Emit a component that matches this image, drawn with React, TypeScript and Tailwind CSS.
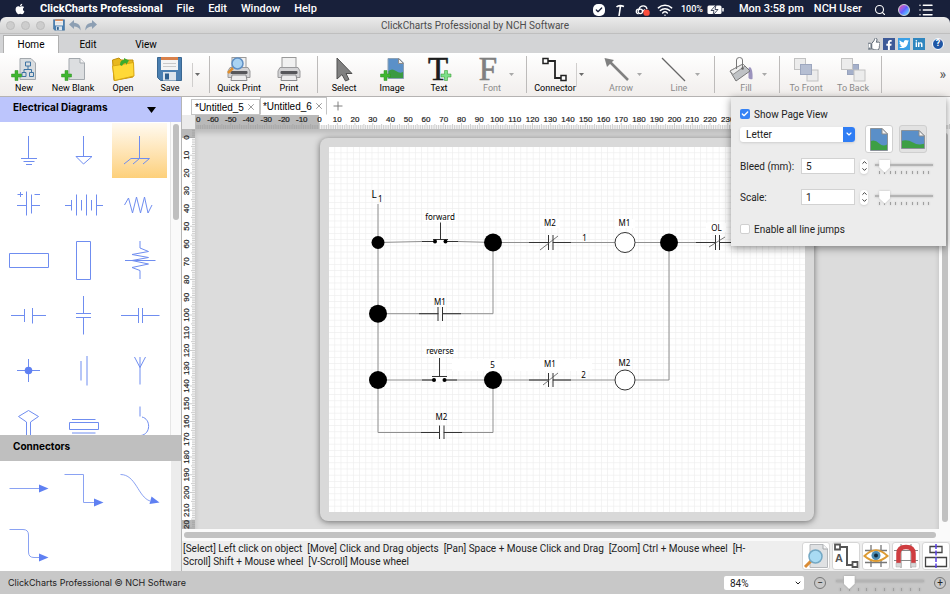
import React from 'react';
import { FaApple, FaFacebookF, FaTwitter, FaLinkedinIn, FaThumbsUp } from 'react-icons/fa';
import { Check, ChevronDown, ChevronUp, List, Plus, Search, Wifi, X } from 'lucide-react';

const UNIT = 17.75;

const symbols = [
	{ name: 'Earth ground', d: 'M27.5 13V35M20 35.5H36M22.5 38.5H33.5M25 41.5H31' },
	{ name: 'Signal ground', d: 'M27.5 13V33.5M20 33.5H36L27.5 41Z' },
	{ name: 'Chassis ground', d: 'M27.5 13V35.5M12 41L19 35.5H37.5L31 41M27.5 35.5L21 41', selected: true },
	{ name: 'Polarised capacitor', d: 'M16 27.5H25M25.5 13.5V37.5M30.5 16.5V35.5M30.5 27.5H39M16.5 16.5H22M19.5 14V19M33.5 16.5H39' },
	{ name: 'Battery', d: 'M9 27.5H15.5M15.5 22V32.5M20.5 16.5V37.5M25.5 22V32.5M30.5 16.5V37.5M35.5 22V32.5M40.5 16.5V37.5M40.5 27.5H47' },
	{ name: 'Resistor', d: 'M12.5 27L16.5 20L20.5 35L24.5 19L28.5 35L32.5 19L36 35L40 27' },
	{ name: 'Impedance', d: 'M8.5 20.5H47.5V34.5H8.5Z' },
	{ name: 'Vertical impedance', d: 'M20.5 8.5H34.5V46.5H20.5Z' },
	{ name: 'Tapped resistor', d: 'M28 8V15L36.5 18.5L20 21.5L36.5 24.5L20 27.5L36.5 31L20 34.5L28 37.5V46M13 27.5H43.5' },
	{ name: 'Contact', d: 'M10 27.5H23.5M23.5 21V34M31.5 20V35.5M31.5 27.5H45' },
	{ name: 'Vertical capacitor', d: 'M27.5 8V25.5M20 25.5H35M20 29.5H35M27.5 29.5V46.5' },
	{ name: 'Capacitor', d: 'M9 27.5H26M26.5 20V35M30.5 20V35M30.5 27.5H47.5' },
	{ name: 'Junction', d: 'M16 27.5H39M27.5 16V39', dot: true },
	{ name: 'Cell', d: 'M25 18V37.5M31 13V42.5' },
	{ name: 'Antenna', d: 'M28 14V41.5M22.5 14L28 24.5L33.5 14' },
	{ name: 'Loop antenna', d: 'M25.5 46V24L17.5 18.5L27.5 12.5L37.5 18.5L29.5 24V46' },
	{ name: 'Crystal', d: 'M16 21.5H39.5M13.5 24.5H42.5V31.5H13.5ZM16 35H39.5' },
	{ name: 'Coil', d: 'M28 8.5V18.5M30 19C39 21 39 36 29 37.5' },
];

const connectors = [
	{ name: 'Straight connector', d: 'M8.5 27.5H38', head: '38,23.5 47.5,27.5 38,31.5' },
	{ name: 'Elbow connector', d: 'M8.5 13.5H27.5V41.5H38', head: '38,37.5 47.5,41.5 38,45.5' },
	{ name: 'Curved connector', d: 'M8.5 13.5C24 13.5 26 36 38 40', head: '39.5,35.5 47.5,41.5 37.5,43' },
	{ name: 'Rounded connector', d: 'M8.5 13.5H22Q27.5 13.5 27.5 19V36Q27.5 41.5 33 41.5H38', head: '38,37.5 47.5,41.5 38,45.5' },
];

function MenuBar() {
	return (
		<header className="flex h-[17px] shrink-0 items-center bg-[#18203a] pt-0.5 pr-4 pl-3.5 text-[11px] font-medium text-white">
			<FaApple className="mr-3.5 mb-0.5 h-3 w-3" />
			<nav className="flex items-center gap-3.5 whitespace-nowrap">
				<a href="#app" className="font-bold">ClickCharts Professional</a>
				<a href="#file">File</a>
				<a href="#edit">Edit</a>
				<a href="#window">Window</a>
				<a href="#help">Help</a>
			</nav>
			<div className="ml-auto flex items-center whitespace-nowrap">
				<span className="mr-2.5 flex h-3 w-3 items-center justify-center rounded-[5px] bg-white text-[#18203a]">
					<Check className="h-2 w-2" strokeWidth={4} />
				</span>
				<svg viewBox="0 0 10 14" className="mr-2.5 h-3.5 w-2.5" fill="none" stroke="white" strokeWidth="1.6">
					<path d="M1.5 4Q4 1.5 9 3.5M5.5 3L4 13" />
				</svg>
				<svg viewBox="0 0 18 14" className="mr-1.5 h-3.5 w-4" fill="none" stroke="white" strokeWidth="1.4">
					<path d="M4 11.500C0 10.500 1 5.500 4.500 6C6 1 13 1.500 13.500 6" />
					<circle cx="6" cy="8.500" r="2.500" />
					<path d="M8 9.500L11 6.500" />
					<circle cx="13" cy="10" r="3.600" fill="#fb4d3d" stroke="none" />
				</svg>
				<Wifi className="mr-2 h-4 w-4" strokeWidth={2.2} />
				<span className="mr-1 text-[9px]">100%</span>
				<svg viewBox="0 0 18 10" className="mr-3.5 h-2.5 w-[18px]">
					<rect x="0.5" y="0.5" width="14" height="8.500" rx="1.500" fill="white" />
					<path d="M16 3V6.500" stroke="white" strokeWidth="1.500" />
					<path d="M9 0L4 5.500H7L6 10L11 4.500H8Z" fill="white" stroke="#18203a" strokeWidth="0.8" />
				</svg>
				<span className="mr-2.5">Mon 3:58 pm</span>
				<span className="mr-3">NCH User</span>
				<Search className="mr-3 h-3 w-3" strokeWidth={2.2} />
				<span className="mr-2 h-3 w-3 rounded-full border border-gray-300 bg-linear-to-br from-pink-500 via-indigo-500 to-cyan-300" />
				<List className="h-4 w-4" strokeWidth={2.2} />
			</div>
		</header>
	);
}

function TitleBar() {
	return (
		<div className="flex h-4 shrink-0 items-center rounded-t-md bg-linear-to-b from-[#ebebeb] to-[#d3d3d3] px-1.5">
			<div className="flex w-[120px] items-center gap-1.5">
				<span className="h-[9px] w-[9px] rounded-full border border-[#bdbdbd] bg-[#cdcdcd]" />
				<span className="h-[9px] w-[9px] rounded-full border border-[#bdbdbd] bg-[#cdcdcd]" />
				<span className="h-[9px] w-[9px] rounded-full border border-[#bdbdbd] bg-[#cdcdcd]" />
				<button aria-label="Save file" className="ml-0.5"><Floppy className="h-3 w-3" /></button>
				<button aria-label="Undo" className="-ml-0.5"><ReplyArrow /></button>
				<button aria-label="Redo" className="-ml-0.5 -scale-x-100"><ReplyArrow /></button>
			</div>
			<h1 className="flex-1 text-center text-[10px] text-[#4c4c4c]">ClickCharts Professional by NCH Software</h1>
			<div className="w-[120px]" />
		</div>
	);
}

function ReplyArrow() {
	return (
		<svg viewBox="0 0 12 11" className="h-[11px] w-3">
			<path d="M0 4.500L5 0V2.800C9.500 3 12 6 11.500 10.500C10 7.500 8 6.500 5 6.500V9Z" fill="#8d9fb3" />
		</svg>
	);
}

function Floppy({ className }: { className?: string }) {
	return (
		<svg viewBox="0 0 25 26" width="25" height="26" className={className}>
			<path d="M0.500 1.500H24.500V24.500H3.500L0.500 21.500Z" fill="#4a7fb1" stroke="#3a6791" />
			<rect x="4" y="2" width="17" height="12" fill="#f4f4f4" />
			<rect x="4" y="1" width="17" height="3" fill="#d9814b" />
			<path d="M6 7.500H19M6 10.500H19" stroke="#c9c9c9" />
			<rect x="6" y="16" width="13" height="8.500" fill="#dbe4ec" />
			<rect x="8" y="17.500" width="4" height="6" fill="#2f608f" />
		</svg>
	);
}

function RibbonTabs() {
	return (
		<div className="flex h-5 shrink-0 items-end border-t border-[#bfbfbf] bg-[#d3d4d6] pr-1.5 pl-[3px] text-[10px] text-black">
			<button className="h-[18px] w-14 border border-b-0 border-[#b0b0b0] bg-white">Home</button>
			<button className="h-[18px] w-[58px]">Edit</button>
			<button className="h-[18px] w-[58px]">View</button>
			<div className="ml-auto flex items-center gap-[3px] pb-[3px]">
				<a href="#like" aria-label="Like" className="flex h-3 w-3 items-center justify-center">
					<FaThumbsUp className="h-3 w-3 fill-white stroke-[#54606e] [stroke-width:40px]" />
				</a>
				<a href="#facebook" aria-label="Facebook" className="flex h-3 w-3 items-end justify-center bg-[#3d5a98] text-white">
					<FaFacebookF className="h-2.5 w-2.5" />
				</a>
				<a href="#twitter" aria-label="Twitter" className="flex h-3 w-3 items-center justify-center bg-[#3ba0e6] text-white">
					<FaTwitter className="h-2.5 w-2.5" />
				</a>
				<a href="#linkedin" aria-label="LinkedIn" className="flex h-3 w-3 items-center justify-center bg-[#2f86bf] text-white">
					<FaLinkedinIn className="h-2 w-2" />
				</a>
				<button aria-label="Help" className="ml-1 flex h-3 w-3 items-center justify-center rounded-full border border-white bg-[#1e56a5] text-[9px] font-bold text-white">?</button>
			</div>
		</div>
	);
}

interface ToolProps {
	label: string;
	className: string;
	disabled?: boolean;
	children: React.ReactNode;
}

function Tool(props: ToolProps) {
	return (
		<button
			disabled={props.disabled}
			className={`${props.className} flex shrink-0 flex-col items-center whitespace-nowrap text-[9px] leading-3 ${props.disabled ? 'text-[#8a8a8a]' : 'text-black'}`}
		>
			<svg viewBox="0 0 26 26" className="h-[26px] w-[26px] overflow-visible">{props.children}</svg>
			{props.label}
		</button>
	);
}

function Divider({ className = '' }: { className?: string }) {
	return <span className={`${className} h-[37px] w-px shrink-0 bg-[#bdbbba]`} />;
}

function Drop({ label, bar, dim }: { label: string; bar?: boolean; dim?: boolean }) {
	return (
		<button aria-label={label} className={`flex h-6 w-2 shrink-0 items-center justify-end ${bar ? 'border-l border-[#d0cecd]' : ''}`}>
			<svg viewBox="0 0 5 3" className="h-[3px] w-[5px]"><path d="M0 0H5L2.500 3Z" fill={dim ? '#a9a9a9' : '#6b6b6b'} /></svg>
		</button>
	);
}

function PlusMark({ x, y, fill = '#3fb531' }: { x: number; y: number; fill?: string }) {
	return (
		<path transform={`translate(${x} ${y})`} d="M4 0.500H7V4H10.500V7H7V10.500H4V7H0.500V4H4Z" fill={fill} stroke="#2d9222" strokeWidth="0.500" />
	);
}

function PrinterShape() {
	return (
		<>
			<rect x="6" y="1.500" width="14" height="11" fill="#f1f1f1" stroke="#9a9a9a" />
			<path d="M4 11.500H22L24 15V21.500H2V15Z" fill="#d3d3d5" stroke="#9a9a9c" />
			<rect x="4.500" y="15" width="17" height="3" rx="1" fill="#55565a" />
			<path d="M6 19H20L21 24.500H5Z" fill="#ededee" stroke="#8b8b8d" />
		</>
	);
}

function Toolbar() {
	return (
		<div className="flex h-11 shrink-0 items-center overflow-hidden border-b border-[#b5b3b2] bg-linear-to-b from-white to-[#f1eeec]">
			<Tool label="New" className="w-12">
				<path d="M9 2.500H20L24.500 7V23.500H9Z" fill="#d9dde0" stroke="#a3a8ad" />
				<path d="M14.500 6H19.500V10H14.500ZM11 16.500H15V20.500H11ZM18.500 16.500H22.500V20.500H18.500ZM17 10V13.500M13 16.500V13.500H20.500V16.500" fill="none" stroke="#3f74a3" />
				<PlusMark x={0} y={14} />
			</Tool>
			<Tool label="New Blank" className="w-[50px]">
				<path d="M9 2.500H20L24.500 7V23.500H9Z" fill="#dcdee0" stroke="#a3a8ad" />
				<path d="M20 2.500V7H24.500" fill="#f6f6f6" stroke="#a3a8ad" />
				<PlusMark x={1} y={14} />
			</Tool>
			<Tool label="Open" className="w-[50px]">
				<path d="M2.500 4L9 2L11 4H23V21L4 24.500Z" fill="#e8b81d" stroke="#c08f0c" />
				<path d="M2.500 10L23.500 6.500L24 20L4.500 24.500Z" fill="#ffd937" stroke="#d9a713" />
				<path d="M10 9Q10 4 14 4V2L19 4.500L16 9V7Q13 7 12 10Z" fill="#3cab2d" />
			</Tool>
			<Tool label="Save" className="w-11"><Floppy /></Tool>
			<Drop label="Save options" bar />
			<Divider className="ml-[9px]" />
			<Tool label="Quick Print" className="w-[58px]">
				<PrinterShape />
				<path d="M7 12L2 17" stroke="#e08d2b" strokeWidth="2.500" />
				<circle cx="11.500" cy="7.500" r="5.500" fill="#a9d3f3" stroke="#5f8fc4" strokeWidth="1.500" />
			</Tool>
			<Tool label="Print" className="w-[42px]"><PrinterShape /></Tool>
			<Divider className="ml-[7px]" />
			<Tool label="Select" className="w-[52px]">
				<path d="M6 2V23L11 18.500L14.500 25L18 23.500L15 17.500H21Z" fill="#808080" stroke="#505050" />
			</Tool>
			<Tool label="Image" className="w-11">
				<path d="M9 2.500H20L24.500 7V22.500H9Z" fill="#5b90c8" stroke="#8ba1b5" />
				<path d="M9.500 15Q13 12 17 15T24 16V22H9.500Z" fill="#3b9a43" />
				<path d="M19.500 2.500V7.500H24.500Z" fill="#f0f0f0" stroke="#8c8c8c" />
				<PlusMark x={1} y={14} />
			</Tool>
			<Tool label="Text" className="w-[50px]">
				<text x="12" y="24" textAnchor="middle" fontFamily="Liberation Serif, serif" fontSize="33" fill="#1d1d1d" stroke="#1d1d1d" strokeWidth="0.6">T</text>
				<PlusMark x={14.500} y={14} fill="#7ee08a" />
			</Tool>
			<Tool label="Font" className="ml-3.5 w-7" disabled>
				<text x="9" y="24" textAnchor="middle" fontFamily="Liberation Serif, serif" fontSize="33" fill="#808080" stroke="#808080" strokeWidth="0.6">F</text>
			</Tool>
			<Drop label="Font options" dim />
			<Divider className="ml-3" />
			<Tool label="Connector" className="ml-[7px] w-[42px]">
				<path d="M6 5H13V22H19" fill="none" stroke="#222" strokeWidth="1.800" />
				<path d="M1 2.500H6V7.500H1ZM19 19.500H24V24.500H19Z" fill="white" stroke="#222" strokeWidth="1.500" />
			</Tool>
			<Drop label="Connector options" bar />
			<Tool label="Arrow" className="ml-6 w-[26px]" disabled>
				<path d="M1 5L20 24" stroke="#808080" strokeWidth="2.500" />
				<path d="M-4 1L5.500 3L-1.500 10Z" transform="translate(0.500 1)" fill="#808080" />
			</Tool>
			<Drop label="Arrow options" dim />
			<Tool label="Line" className="ml-6 w-[26px]" disabled>
				<path d="M-4 2L19 25" stroke="#666" strokeWidth="1.200" />
			</Tool>
			<Drop label="Line options" dim />
			<Divider className="ml-3.5" />
			<Tool label="Fill" className="ml-[18px] w-[26px]" disabled>
				<g transform="translate(-5 0)">
					<path d="M22 11Q25 13 24.500 23Q22 24 20.500 22V12Z" fill="#9b93bd" />
					<path d="M2 15L15 8L22 15L8 25Z" fill="#bfc2c5" stroke="#777" />
					<path d="M2 15L15 8L17 10L5 18.500Z" fill="#ededed" stroke="#8d8d8d" />
					<path d="M8.500 13V4Q8.500 1.500 11.500 1.500T14.500 4V12" fill="none" stroke="#777" />
					<circle cx="14.500" cy="12.500" r="1.300" fill="#666" />
				</g>
			</Tool>
			<Drop label="Fill options" dim />
			<Divider className="ml-3" />
			<Tool label="To Front" className="w-[52px]" disabled>
				<rect x="1.500" y="2.500" width="11" height="11" fill="#ececec" stroke="#c2c2c2" />
				<rect x="14" y="14" width="11" height="11" fill="#ececec" stroke="#c2c2c2" />
				<rect x="7.500" y="8.500" width="11" height="10" fill="#b5bed2" stroke="#9da7bf" />
			</Tool>
			<Tool label="To Back" className="w-[42px]" disabled>
				<rect x="7.500" y="8.500" width="11" height="10" fill="#a5b0ca" stroke="#98a3bd" />
				<rect x="1.500" y="2.500" width="11" height="11" fill="#ececec" stroke="#c2c2c2" />
				<rect x="14" y="14" width="11" height="11" fill="#ececec" stroke="#c2c2c2" />
			</Tool>
			<Divider className="ml-[7px]" />
			<button aria-label="More tools" className="mr-1 ml-auto text-[14px] text-[#555]">»</button>
		</div>
	);
}

function Sidebar() {
	return (
		<aside className="flex w-[182px] shrink-0 flex-col border-r border-[#b5b5b5] bg-white">
			<button className="flex h-[25px] shrink-0 items-center justify-between bg-[#bcc5fc] pr-[25px] pb-1 pl-[13px] font-['Inter',sans-serif] text-[10px] font-bold text-black">
				Electrical Diagrams
				<svg viewBox="0 0 9 6" className="mt-1 h-1.5 w-[9px]"><path d="M0 0H9L4.500 6Z" /></svg>
			</button>
			<div className="flex min-h-0 flex-1">
				<div className="grid flex-1 grid-cols-3 content-start overflow-hidden pt-px pr-[3px] pl-px">
					{symbols.map((s) => (
						<button key={s.name} aria-label={s.name} className={`h-[55px] ${s.selected ? 'bg-linear-to-b from-[#fffaf0] to-[#fdd07a]' : ''}`}>
							<svg viewBox="0 0 55 55" className="h-[55px] w-[55px]" fill="none" stroke="#6f8df0">
								<path d={s.d} />
								{s.dot && <circle cx="27.500" cy="27.500" r="3.800" fill="#5f80f2" stroke="none" />}
							</svg>
						</button>
					))}
				</div>
				<div className="w-[11px] border-l border-[#e6e6e6] bg-[#fafafa] pt-[2px] pl-0.5">
					<div className="h-24 w-1.5 rounded-full bg-[#bfbfbf]" />
				</div>
			</div>
			<button className="h-[26px] shrink-0 bg-[#bfbfbf] pb-1 pl-[13px] text-left font-['Inter',sans-serif] text-[10px] font-bold text-black">Connectors</button>
			<div className="flex shrink-0">
				<div className="grid flex-1 grid-cols-3 pr-1 pl-px">
					{connectors.map((c) => (
						<button key={c.name} aria-label={c.name} className="h-[55px]">
							<svg viewBox="0 0 55 55" className="h-[55px] w-[55px]" fill="none" stroke="#8aa2f3">
								<path d={c.d} />
								<polygon points={c.head} fill="#5f80f2" stroke="none" />
							</svg>
						</button>
					))}
				</div>
				<div className="w-2.5 bg-[#ececec]" />
			</div>
		</aside>
	);
}

function range(from: number, to: number) {
	return Array.from({ length: to - from + 1 }, (_, i) => from + i);
}

function tickPath(from: number, to: number, origin: number, horizontal: boolean) {
	return range(from, to)
		.map((n) => {
			const p = origin + (n * UNIT) / 10;
			const start = 14 - (n % 10 === 0 ? 6 : n % 5 === 0 ? 5 : 4);
			return horizontal ? `M${p} ${start}V14` : `M${start} ${p}H14`;
		})
		.join('');
}

function TopRuler() {
	return (
		<svg className="h-3.5 w-full min-w-0 flex-1 bg-white" fontFamily="Liberation Sans, sans-serif" fontSize="8" fill="#222">
			<rect width="124" height="14" fill="#b9b9b9" />
			<path d={tickPath(-69, 360, 124.5, true)} stroke="#999" strokeWidth="0.500" />
			<text x="1" y="7" stroke="#222" strokeWidth="0.2">0</text>
			{range(-6, 23).map((n) => (
				<text key={n} x={124.5 + n * UNIT} y="7" textAnchor="middle" stroke="#222" strokeWidth="0.2">{n * 10}</text>
			))}
		</svg>
	);
}

function SideRuler() {
	return (
		<svg className="h-full w-[13px] shrink-0 bg-white" fontFamily="Liberation Sans, sans-serif" fontSize="8" fill="#222">
			<rect width="13" height="9" fill="#b9b9b9" />
			<rect y="391" width="13" height="400" fill="#b9b9b9" />
			<path d={tickPath(-5, 400, 8.5, false)} stroke="#999" strokeWidth="0.500" />
			{range(0, 21).map((n) => (
				<text key={n} transform={`translate(7 ${8.5 + n * UNIT}) rotate(-90)`} textAnchor="middle" stroke="#222" strokeWidth="0.2">{n * 10}</text>
			))}
			<text transform="translate(7 400) rotate(-90)" stroke="#222" strokeWidth="0.2">20</text>
		</svg>
	);
}

const nodes = [
	[378, 242.5, 6.5],
	[493, 242.5, 9],
	[378, 313.7, 9],
	[378, 380, 9],
	[493, 380, 9],
	[669, 242.5, 9],
];

const labels: [string, number, number][] = [
	['forward', 440, 220],
	['M1', 440, 305],
	['reverse', 440, 354],
	['5', 492.5, 368],
	['M2', 441.5, 420],
	['M2', 550, 226],
	['1', 584.5, 241],
	['M1', 624.5, 226],
	['OL', 716.5, 231],
	['M1', 550, 367],
	['2', 583.5, 378],
	['M2', 624.5, 366],
];

function Diagram() {
	return (
		<svg viewBox="329 147 476 365" className="block h-[365px] w-[476px] bg-white" fontFamily="Noto Sans, sans-serif" fontSize="8">
			<defs>
				<pattern id="grid" x="329" y="147" width="6.200" height="6.200" patternUnits="userSpaceOnUse">
					<path d="M6 0V6.200M0 6H6.200" stroke="#ececec" strokeWidth="0.8" />
				</pattern>
			</defs>
			<rect x="329" y="147" width="476" height="365" fill="url(#grid)" />
			<path d="M452 359H592V371H452ZM424 212H456V221H424ZM424 346H456V356H424ZM540 219H560V228H540ZM615 219H635V228H615ZM706 223H726V232H706Z" fill="white" />
			<path
				d="M378 204V432.500H493V380M378 242.500L422 241.500H458L493 242.500V313.700H378M378 380H669V242.500M493 242.500H760"
				fill="none"
				stroke="#8f8f8f"
			/>
			<path d="M436 241.500H444M435 380H444M439 313.700H442M440 432.500H443.500M549 242.500H552.500M549 380H552.500M716 242.500H719" stroke="white" strokeWidth="2" />
			<path
				d="M422 241.500H434M446 241.500H458M433 239.500H448M440.500 222.500V239.500M419 313.700H438M438 307V321M442.500 307V321M442.500 313.700H461M422 380H434M445 380H457M432 376.500H447M439.500 358V376.500M421 432.500H439M439.500 425.500V439M444 425.500V439M444 432.500H462M529 242.500H548M548.500 235V250M553 235V250M553 242.500H571M529 380H548M548.500 373V387M553 373V387M553 380H571M696 242.500H715M715.500 235V250M719.500 235V250M719.500 242.500H738"
				stroke="#333"
			/>
			<path d="M540 250L558 236M543 385L558 373M709 247L725 237" stroke="#555" strokeWidth="0.800" />
			{[[435, 241.5], [445.5, 241.5], [434, 380], [444.5, 380]].map(([x, y]) => (
				<circle key={`${x}-${y}`} cx={x} cy={y} r="2" />
			))}
			{nodes.map(([x, y, r]) => (
				<circle key={`${x}-${y}`} cx={x} cy={y} r={r} />
			))}
			<circle cx="625" cy="242.500" r="10" fill="white" stroke="#333" />
			<circle cx="625" cy="380" r="10" fill="white" stroke="#333" />
			<text x="371.500" y="198" fontSize="10">L</text>
			<text x="378" y="202">1</text>
			{labels.map(([text, x, y]) => (
				<text key={`${x}-${y}`} x={x} y={y} textAnchor="middle">{text}</text>
			))}
		</svg>
	);
}

function DocumentTabs() {
	return (
		<div className="flex h-[18px] shrink-0 items-end bg-white pl-[9px] font-['Liberation_Sans',Arial,sans-serif] text-[10px] text-black">
			<div className="flex h-4 items-center gap-0.5 border border-[#c4c4c4] bg-white px-[3px]">
				<button>*Untitled_5</button>
				<button aria-label="Close Untitled_5"><X className="h-2.5 w-2.5 text-[#777]" strokeWidth={1.8} /></button>
			</div>
			<div className="flex h-[18px] items-center gap-0.5 border border-[#c4c4c4] border-b-white bg-white px-[2px]">
				<button>*Untitled_6</button>
				<button aria-label="Close Untitled_6"><X className="h-2.5 w-2.5 text-[#777]" strokeWidth={1.8} /></button>
			</div>
			<button aria-label="New document" className="ml-1 flex h-[18px] items-center"><Plus className="h-3.5 w-3.5 text-[#777]" strokeWidth={1.6} /></button>
		</div>
	);
}

interface SliderProps {
	label: string;
	value: number;
	width: string;
}

function Slider(props: SliderProps) {
	return (
		<div className={`${props.width} flex h-4 flex-col drop-shadow-[0_0_1px_rgba(0,0,0,0.2)]`}>
			<input
				type="range"
				aria-label={props.label}
				defaultValue={props.value}
				className="h-3.5 w-full appearance-none bg-transparent [&::-webkit-slider-runnable-track]:h-0.5 [&::-webkit-slider-runnable-track]:bg-[#b4b4b4] [&::-webkit-slider-thumb]:-mt-1 [&::-webkit-slider-thumb]:h-[13px] [&::-webkit-slider-thumb]:w-[11px] [&::-webkit-slider-thumb]:appearance-none [&::-webkit-slider-thumb]:bg-white [&::-webkit-slider-thumb]:[clip-path:polygon(0_0,100%_0,100%_60%,50%_100%,0_60%)]"
			/>
			<div className="flex justify-between px-1">
				{range(0, 9).map((n) => (
					<span key={n} className="h-[3px] w-px bg-[#a0a0a0]" />
				))}
			</div>
		</div>
	);
}

interface NumberRowProps {
	id: string;
	label: string;
	value: string;
}

function NumberRow(props: NumberRowProps) {
	return (
		<div className="flex h-4 items-center">
			<label htmlFor={props.id} className="w-[61px]">{props.label}</label>
			<input id={props.id} defaultValue={props.value} className="h-4 w-[54px] border border-[#d2d2d2] bg-white px-1" />
			<div className="mr-[7px] ml-[5px] flex h-[15px] w-2 flex-col items-center justify-center rounded-full bg-white shadow-sm">
				<button aria-label={`Increase ${props.id}`}><ChevronUp className="h-[7px] w-[7px]" strokeWidth={3} /></button>
				<button aria-label={`Decrease ${props.id}`}><ChevronDown className="h-[7px] w-[7px]" strokeWidth={3} /></button>
			</div>
			<Slider label={`${props.id} slider`} value={9} width="w-[58px]" />
		</div>
	);
}

function Landscape({ wide }: { wide?: boolean }) {
	const w = wide ? 24 : 18;
	const h = wide ? 19 : 23;
	return (
		<svg viewBox={`0 0 ${w} ${h}`} width={w} height={h}>
			<path d={`M0.500 0.500H${w - 6}L${w - 0.5} 6V${h - 0.5}H0.500Z`} fill="#5a8fc8" stroke="#8b9299" />
			<path d={`M1 ${h * 0.56}Q${w * 0.3} ${h * 0.5} ${w * 0.5} ${h * 0.66}T${w - 1} ${h * 0.72}V${h - 1}H1Z`} fill="#3d9f45" />
			<path d={`M${w - 6} 0.500V6H${w - 0.5}Z`} fill="#f2f2f2" stroke="#8b8b8b" />
		</svg>
	);
}

function PagePanel() {
	return (
		<section className="absolute top-0 right-1 flex w-[215px] flex-col bg-[#ececec] px-[9px] pt-3 pb-3 text-[10px] text-[#222] shadow-[0_2px_8px_rgba(0,0,0,0.45)]">
			<label className="flex h-2.5 items-center gap-1">
				<input type="checkbox" defaultChecked className="peer sr-only" />
				<span className="flex h-2.5 w-2.5 items-center justify-center rounded-[2px] bg-[#3683f5]"><Check className="h-2 w-2 text-white" strokeWidth={4} /></span>
				Show Page View
			</label>
			<div className="mt-1.5 flex items-center">
				<div className="relative -mt-2.5 mr-2.5 w-[115px]">
					<select aria-label="Page size" defaultValue="Letter" className="block h-[15px] w-full appearance-none rounded-[3px] bg-white pl-1.5 shadow-sm">
						<option>Letter</option>
						<option>A4</option>
					</select>
					<span className="pointer-events-none absolute inset-y-0 right-0 flex w-3 items-center justify-center rounded-r-[3px] bg-[#2f7df4] text-white">
						<ChevronDown className="h-2 w-2" strokeWidth={3.5} />
					</span>
				</div>
				<button aria-label="Portrait" className="mr-1.5 flex h-7 w-7 items-center justify-center rounded-[3px] border border-[#d0d0d0] bg-white"><Landscape /></button>
				<button aria-label="Landscape" className="flex h-7 w-7 items-center justify-center rounded-[3px] border border-[#cfcfcf] bg-[#e2e2e2]"><Landscape wide /></button>
			</div>
			<div className="mt-[5px] flex flex-col gap-[15px]">
				<NumberRow id="bleed" label="Bleed (mm):" value="5" />
				<NumberRow id="scale" label="Scale:" value="1" />
			</div>
			<label className="mt-[19px] flex h-2.5 items-center gap-1">
				<input type="checkbox" className="h-2.5 w-2.5 appearance-none rounded-[2px] border border-[#d0d0d0] bg-white" />
				Enable all line jumps
			</label>
		</section>
	);
}

function ViewButton({ label, children }: { label: string; children: React.ReactNode }) {
	return (
		<button aria-label={label} className="flex h-7 w-7 items-center justify-center rounded-[3px] border border-[#d6d6d6] bg-white">
			<svg viewBox="0 0 26 26" className="h-[26px] w-[26px]" fill="none">{children}</svg>
		</button>
	);
}

function HelpStrip() {
	return (
		<div className="flex h-[30px] shrink-0 items-center bg-[#eeeeee]">
			<p className="min-w-0 flex-1 pb-0.5 pl-px text-[10px] leading-[13px] text-[#222]">
				[Select] Left click on object&nbsp; [Move] Click and Drag objects&nbsp; [Pan] Space + Mouse Click and Drag&nbsp; [Zoom] Ctrl + Mouse wheel&nbsp; [H-<br />
				Scroll] Shift + Mouse wheel&nbsp; [V-Scroll] Mouse wheel
			</p>
			<div className="flex shrink-0 gap-0.5">
				<ViewButton label="Preview">
					<path d="M7 1.500H20L24.500 6V24.500H7Z" fill="#dfe1e3" stroke="#b5b8bb" />
					<path d="M20 1.500V6H24.500" fill="#f7f7f7" stroke="#a5a8ab" />
					<path d="M8 18L2 24" stroke="#d98b35" strokeWidth="3" />
					<circle cx="12.500" cy="13.500" r="6.500" fill="#a9dbf3" stroke="#74a8c4" strokeWidth="1.500" />
				</ViewButton>
				<ViewButton label="Connector labels">
					<path d="M7 4H14V22H20" stroke="#555" strokeWidth="2" />
					<path d="M2 1.500H7V6.500H2ZM19.500 19H24.500V24H19.500Z" fill="white" stroke="#555" strokeWidth="1.800" />
					<text x="2" y="19" fontFamily="Liberation Sans, sans-serif" fontSize="11" fontWeight="bold" fill="#555">A</text>
				</ViewButton>
				<ViewButton label="Show grid">
					<path d="M8 2V24M18 2V24M2 7.500H24M2 19.500H24" stroke="#777" strokeWidth="1.300" />
					<path d="M1.500 13Q13 1.500 24.500 13Q13 23 1.500 13Z" fill="white" stroke="#dd9b33" strokeWidth="2" />
					<circle cx="13" cy="12.500" r="4.500" fill="#4b8bb0" />
					<circle cx="13" cy="12.500" r="2" fill="#102a3c" />
				</ViewButton>
				<ViewButton label="Snap to grid">
					<path d="M1 7.500H25M1 17.500H25M8 1V25M18 1V25" stroke="#888" />
					<path d="M5.500 20V10.500Q5.500 4 13 4T20.500 10.500V20" stroke="#cf3d40" strokeWidth="4.500" />
					<path d="M3 20H8V24H3ZM18 20H23V24H18Z" fill="#d7d7d7" stroke="#aaa" strokeWidth="0.500" />
				</ViewButton>
				<ViewButton label="Align objects">
					<path d="M7 3.500H19V9.500H7ZM2.500 14.500H23.500V23.500H2.500Z" fill="white" stroke="#444" strokeWidth="1.300" />
					<path d="M13 1V25" stroke="#5a40e6" strokeWidth="1.500" strokeDasharray="5 1.500" />
				</ViewButton>
			</div>
		</div>
	);
}

function StatusBar() {
	return (
		<footer className="flex h-[23px] shrink-0 items-center bg-[#c8c8c8] pr-1 pl-2 text-[10px] text-[#222]">
			<span className="font-['Inter',sans-serif] text-[9px]">ClickCharts Professional © NCH Software</span>
			<div className="ml-auto flex items-center">
				<div className="relative mr-2.5 w-20">
					<select aria-label="Zoom" defaultValue="84%" className="block h-3.5 w-full appearance-none rounded-[2px] bg-white pl-1.5">
						<option>84%</option>
						<option>100%</option>
					</select>
					<ChevronDown className="pointer-events-none absolute top-[3px] right-0.5 h-2 w-2" strokeWidth={3} />
				</div>
				<button aria-label="Zoom out" className="mr-2.5 flex h-3 w-3 items-center justify-center rounded-full border border-[#777] leading-none">−</button>
				<Slider label="Zoom level" value={10} width="w-[88px]" />
				<button aria-label="Zoom in" className="ml-2.5 flex h-3 w-3 items-center justify-center rounded-full border border-[#777] leading-none">+</button>
			</div>
		</footer>
	);
}

export default function App() {
	return (
		<div className="flex h-screen flex-col overflow-hidden bg-[#18203a] font-['Roboto',sans-serif]">
			<MenuBar />
			<TitleBar />
			<RibbonTabs />
			<Toolbar />
			<main className="relative flex min-h-0 flex-1 bg-white">
				<Sidebar />
				<div className="flex min-w-0 flex-1 flex-col">
					<DocumentTabs />
					<div className="flex shrink-0">
						<div className="w-[13px] shrink-0 bg-[#ebebeb]" />
						<TopRuler />
					</div>
					<div className="flex min-h-0 flex-1">
						<SideRuler />
						<div className="min-w-0 flex-1 overflow-hidden bg-[#dcdcdc] pt-[9px] pl-[125px] shadow-[inset_0_4px_5px_rgba(0,0,0,0.15)]">
							<div className="w-[494px] rounded-lg bg-[#d9d9d9] p-[9px] shadow-[0_1px_6px_rgba(0,0,0,0.5)]">
								<Diagram />
							</div>
						</div>
						<div className="w-[11px] shrink-0 bg-[#fafafa] px-[3px] pt-1 pb-[7px]">
							<div className="h-full w-1.5 rounded-full bg-[#c1c1c1]" />
						</div>
					</div>
					<div className="h-3 shrink-0 bg-[#fafafa] py-[3px] pr-3.5 pl-0.5">
						<div className="h-1.5 rounded-full bg-[#c1c1c1]" />
					</div>
					<HelpStrip />
				</div>
				<PagePanel />
			</main>
			<StatusBar />
		</div>
	);
}
